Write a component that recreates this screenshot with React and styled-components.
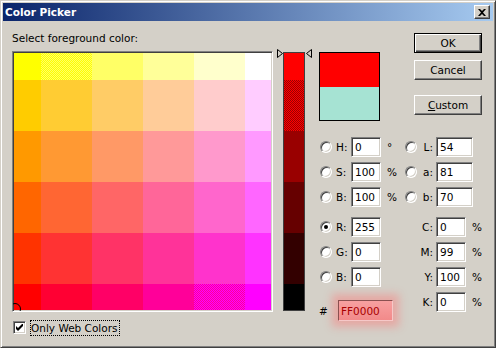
import styled, { createGlobalStyle, css } from "styled-components"

const GlobalStyle = createGlobalStyle`
    html, body {
        margin: 0;
        padding: 0;
        background: #d4d0c8;
    }
`

const Window = styled.div`
    width: 496px;
    height: 348px;
    box-sizing: border-box;
    padding: 2px;
    display: flex;
    flex-direction: column;
    background: #d4d0c8;
    border: 1px solid;
    border-color: #d4d0c8 #404040 #404040 #d4d0c8;
    box-shadow: inset 1px 1px #fff, inset -1px -1px #808080;
    font-family: "DejaVu Sans", sans-serif;
    font-size: 10.5px;
    color: #000;
`

const TitleBar = styled.div`
    height: 18px;
    flex-shrink: 0;
    display: flex;
    align-items: center;
    justify-content: space-between;
    padding: 0 3px 0 2px;
    background: linear-gradient(to right, #0a246a, #a6caf0);

    .title {
        color: #fff;
        font-weight: bold;
        font-size: 10.5px;
    }
`

const CloseButton = styled.div`
    width: 16px;
    height: 14px;
    box-sizing: border-box;
    display: flex;
    align-items: center;
    justify-content: center;
    background: #d4d0c8;
    border: 1px solid;
    border-color: #fff #404040 #404040 #fff;
    box-shadow: inset -1px -1px #808080;
`

const Body = styled.div`
    flex: 1;
    display: flex;
    padding-left: 9px;
`

const LeftCol = styled.div`
    display: flex;
    flex-direction: column;
    padding-top: 11px;

    .label {
        line-height: 13px;
        height: 13px;
    }
`

const Sunken = css`
    border: 1px solid;
    border-color: #808080 #fff #fff #808080;
    box-shadow: inset 1px 1px #404040, inset -1px -1px #d4d0c8;
`

const Swatches = styled.div`
    position: relative;
    margin-top: 6px;
    box-sizing: border-box;
    width: 261px;
    height: 261px;
    padding: 1px;
    ${Sunken};
    display: grid;
    grid-template-columns: 27px repeat(4, 51px) 26px;
    grid-template-rows: 27px repeat(4, 51px) 26px;
    overflow: hidden;
`

const Cell = styled.div`
    background: ${({ $color }) => $color};
    ${({ $dither }) =>
        $dither &&
        css`
            background: repeating-conic-gradient(
                    ${$dither[0]} 0 25%,
                    ${$dither[1]} 0 50%
                )
                0 0 / 2px 2px;
        `}
`

const Marker = styled.div`
    position: absolute;
    left: -4px;
    bottom: -4px;
    width: 12px;
    height: 12px;
    box-sizing: border-box;
    border: 1px solid #000;
    border-radius: 50%;
`

const CheckRow = styled.label`
    margin-top: 7px;
    height: 17px;
    display: flex;
    align-items: center;
    padding-left: 1px;
    gap: 4px;

    .text {
        border: 1px dotted #000;
        padding: 0 1px 0 0;
        line-height: 14px;
    }
`

const CheckBox = styled.span`
    width: 13px;
    height: 13px;
    box-sizing: border-box;
    background: #fff;
    display: flex;
    align-items: center;
    justify-content: center;
    ${Sunken};
`

const HueCol = styled.div`
    position: relative;
    margin-left: 10px;
    padding-top: 31px;
`

const HueBar = styled.div`
    width: 22px;
    height: 259px;
    box-sizing: border-box;
    border: 1px solid #404040;
    display: grid;
    grid-template-rows: 27px repeat(4, 51px) 26px;
`

const Pointer = styled.svg`
    position: absolute;
    top: 28px;
    left: ${({ $side }) => ($side === "left" ? "-6px" : "23px")};
`

const RightArea = styled.div`
    margin-left: 14px;
    display: flex;
    flex-direction: column;
`

const TopRow = styled.div`
    display: flex;
    align-items: flex-start;
`

const Swatch = styled.div`
    margin-top: 31px;
    width: 61px;
    height: 69px;
    box-sizing: border-box;
    border: 1px solid #000;
    display: flex;
    flex-direction: column;

    .new {
        height: 34px;
        background: #ff0000;
    }
    .old {
        flex: 1;
        background: #a6e3d3;
    }
`

const Buttons = styled.div`
    margin-left: 34px;
    margin-top: 12px;
    display: flex;
    flex-direction: column;
`

const Button = styled.button`
    width: 68px;
    height: 20px;
    box-sizing: border-box;
    padding: 0;
    margin: 0;
    margin-top: ${({ $gap }) => $gap || 0}px;
    font-family: inherit;
    font-size: 10.5px;
    color: #000;
    background: #d4d0c8;
    border: 1px solid;
    border-color: #fff #404040 #404040 #fff;
    box-shadow: inset -1px -1px #808080;

    ${({ $default }) =>
        $default &&
        css`
            border: 1px solid #000;
            box-shadow: inset 1px 1px #fff, inset -1px -1px #404040,
                inset -2px -2px #808080;
        `}

    u {
        text-decoration: underline;
    }
`

const Fields = styled.div`
    margin-top: 16px;
    display: flex;
    flex-direction: column;
`

const Row = styled.div`
    display: flex;
    align-items: flex-start;
    margin-top: ${({ $gap }) => $gap}px;
`

const Group = styled.div`
    display: flex;
    align-items: center;
    height: 20px;
    width: ${({ $w }) => ($w ? `${$w}px` : "auto")};
`

const HexGroup = styled.div`
    width: 85px;
    padding-top: 8px;
    display: flex;
    align-items: center;

    .hash {
        width: 19px;
    }
`

const RadioSlot = styled.div`
    width: ${({ $w }) => $w}px;
    display: flex;
    padding-left: 1px;
    box-sizing: border-box;
`

const Radio = styled.span`
    position: relative;
    width: 12px;
    height: 12px;
    box-sizing: border-box;
    border-radius: 50%;
    background: #fff;
    border: 1px solid;
    border-color: #808080 #fff #fff #808080;
    box-shadow: inset 1px 1px #404040, inset -1px -1px #d4d0c8;

    ${({ $checked }) =>
        $checked &&
        css`
            &::after {
                content: "";
                position: absolute;
                left: 3px;
                top: 3px;
                width: 4px;
                height: 4px;
                border-radius: 50%;
                background: #000;
            }
        `}
`

const Label = styled.span`
    width: ${({ $w }) => $w}px;
    box-sizing: border-box;
    text-align: ${({ $right }) => ($right ? "right" : "left")};
    padding-right: ${({ $right }) => ($right ? "3px" : "0")};
`

const Input = styled.input`
    width: ${({ $w }) => $w}px;
    height: 20px;
    box-sizing: border-box;
    margin: 0;
    padding: 0 0 0 3px;
    font-family: inherit;
    font-size: 10.5px;
    color: #000;
    background: #fff;
    outline: none;
    ${Sunken};
`

const Unit = styled.span`
    padding-left: 6px;
`

const HexInput = styled.input`
    width: 55px;
    height: 21px;
    box-sizing: border-box;
    margin: 0;
    padding: 0 0 0 2px;
    font-family: inherit;
    font-size: 10.5px;
    color: #a80000;
    background: linear-gradient(#f7a0a0, #f28a8a);
    border: 1px solid;
    border-color: #8a5050 #f6c8c8 #f6c8c8 #8a5050;
    box-shadow: 0 0 8px 6px rgba(255, 110, 110, 0.4);
    outline: none;
`

const vals = ["00", "33", "66", "99", "CC", "FF"]

const cellFor = (row, col) => {
    const g = vals[5 - row]
    const b = vals[col]
    if (row === 0 && col === 1) return { dither: ["#ffff00", "#ffff66"] }
    if (row === 5 && col === 4) return { dither: ["#ff00ff", "#ff0099"] }
    return { color: `#FF${g}${b}` }
}

const hues = [
    { color: "#ff0000" },
    { dither: ["#ff0000", "#990000"] },
    { color: "#990000" },
    { color: "#660000" },
    { color: "#330000" },
    { color: "#000000" }
]

const FieldRow = ({ gap, left, right }) => (
    <Row $gap={gap}>
        <Group $w={85}>{left}</Group>
        <Group>{right}</Group>
    </Row>
)

const LeftField = ({ name, value, unit, checked }) => (
    <>
        <RadioSlot $w={17}>
            <Radio $checked={checked} />
        </RadioSlot>
        <Label $w={15}>{name}:</Label>
        <Input $w={30} readOnly value={value} />
        {unit && <Unit>{unit}</Unit>}
    </>
)

const RightField = ({ name, value, unit, radio, w }) => (
    <>
        <RadioSlot $w={14}>{radio && <Radio />}</RadioSlot>
        <Label $w={18} $right>
            {name}:
        </Label>
        <Input $w={w} readOnly value={value} />
        {unit && <Unit>{unit}</Unit>}
    </>
)

const App = () => {
    return (
        <>
            <GlobalStyle />
            <Window>
                <TitleBar>
                    <span className="title">Color Picker</span>
                    <CloseButton>
                        <svg width="8" height="7" viewBox="0 0 8 7">
                            <path
                                d="M0 0h2l2 2 2-2h2L5 3.5 8 7H6L4 5 2 7H0l3-3.5z"
                                fill="#000"
                            />
                        </svg>
                    </CloseButton>
                </TitleBar>

                <Body>
                    <LeftCol>
                        <span className="label">Select foreground color:</span>
                        <Swatches>
                            {vals.map((_, r) =>
                                vals.map((_, c) => {
                                    const cell = cellFor(r, c)
                                    return (
                                        <Cell
                                            key={`${r}-${c}`}
                                            $color={cell.color}
                                            $dither={cell.dither}
                                        />
                                    )
                                })
                            )}
                            <Marker />
                        </Swatches>
                        <CheckRow>
                            <CheckBox>
                                <svg width="7" height="7" viewBox="0 0 7 7">
                                    <path
                                        d="M0 2v3l2 2 5-5V-1L2 4z"
                                        fill="#000"
                                    />
                                </svg>
                            </CheckBox>
                            <span className="text">Only Web Colors</span>
                        </CheckRow>
                    </LeftCol>

                    <HueCol>
                        <Pointer $side="left" width="6" height="9" viewBox="0 0 6 9">
                            <path d="M0.5 0.5L5.5 4.5L0.5 8.5Z" fill="#d4d0c8" stroke="#000" />
                        </Pointer>
                        <HueBar>
                            {hues.map((h, i) => (
                                <Cell key={i} $color={h.color} $dither={h.dither} />
                            ))}
                        </HueBar>
                        <Pointer $side="right" width="6" height="9" viewBox="0 0 6 9">
                            <path d="M5.5 0.5L0.5 4.5L5.5 8.5Z" fill="#d4d0c8" stroke="#000" />
                        </Pointer>
                    </HueCol>

                    <RightArea>
                        <TopRow>
                            <Swatch>
                                <div className="new" />
                                <div className="old" />
                            </Swatch>
                            <Buttons>
                                <Button $default>OK</Button>
                                <Button $gap={7}>Cancel</Button>
                                <Button $gap={15}>
                                    <u>C</u>ustom
                                </Button>
                            </Buttons>
                        </TopRow>

                        <Fields>
                            <FieldRow
                                gap={0}
                                left={<LeftField name="H" value="0" unit="°" />}
                                right={<RightField name="L" value="54" radio w={37} />}
                            />
                            <FieldRow
                                gap={5}
                                left={<LeftField name="S" value="100" unit="%" />}
                                right={<RightField name="a" value="81" radio w={37} />}
                            />
                            <FieldRow
                                gap={5}
                                left={<LeftField name="B" value="100" unit="%" />}
                                right={<RightField name="b" value="70" radio w={37} />}
                            />
                            <FieldRow
                                gap={10}
                                left={<LeftField name="R" value="255" checked />}
                                right={<RightField name="C" value="0" unit="%" w={30} />}
                            />
                            <FieldRow
                                gap={5}
                                left={<LeftField name="G" value="0" />}
                                right={<RightField name="M" value="99" unit="%" w={30} />}
                            />
                            <FieldRow
                                gap={5}
                                left={<LeftField name="B" value="0" />}
                                right={<RightField name="Y" value="100" unit="%" w={30} />}
                            />
                            <Row $gap={5}>
                                <HexGroup>
                                    <span className="hash">#</span>
                                    <HexInput readOnly value="FF0000" />
                                </HexGroup>
                                <Group>
                                    <RightField name="K" value="0" unit="%" w={30} />
                                </Group>
                            </Row>
                        </Fields>
                    </RightArea>
                </Body>
            </Window>
        </>
    )
}

export default App
